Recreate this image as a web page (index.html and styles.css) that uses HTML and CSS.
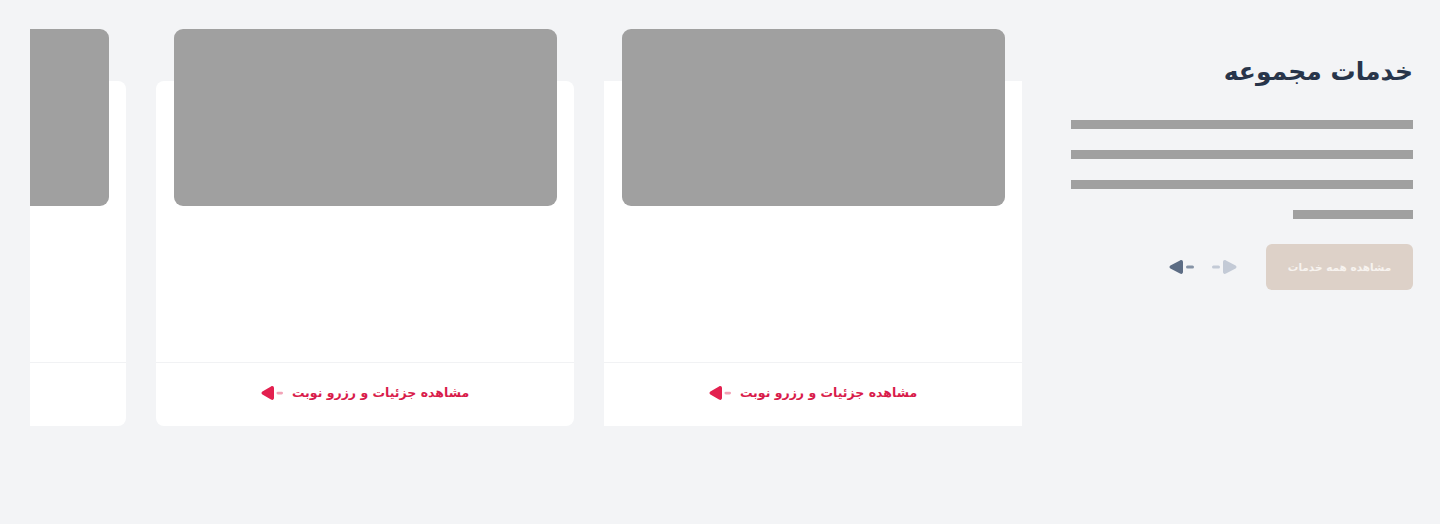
FILE: index.html
```html
<!DOCTYPE html>
<html lang="fa" dir="rtl">
<head>
<meta charset="utf-8">
<title>خدمات مجموعه</title>
<link rel="stylesheet" href="styles.css">
</head>
<body>
<main class="section">
  <aside class="intro">
    <h2 class="intro-title">خدمات مجموعه</h2>
    <div class="skeleton">
      <span class="bar"></span>
      <span class="bar"></span>
      <span class="bar"></span>
      <span class="bar bar--short"></span>
    </div>
    <div class="intro-actions">
      <a class="all-btn" href="#">مشاهده همه خدمات</a>
      <div class="nav">
        <button class="nav-btn nav-btn--off" aria-label="قبلی">
          <svg width="26" height="16" viewBox="0 0 26 16"><rect x="0" y="6.5" width="8" height="3" rx="1.5" fill="#c3cad6"/><path d="M11 3.2 C11 1.2 12.6 0.6 14 1.6 L23.6 6.6 C24.8 7.3 24.8 8.7 23.6 9.4 L14 14.4 C12.6 15.4 11 14.8 11 12.8 Z" fill="#c3cad6"/></svg>
        </button>
        <button class="nav-btn" aria-label="بعدی">
          <svg width="26" height="16" viewBox="0 0 26 16"><path d="M14 3.2 C14 1.2 12.4 0.6 11 1.6 L1.4 6.6 C0.2 7.3 0.2 8.7 1.4 9.4 L11 14.4 C12.4 15.4 14 14.8 14 12.8 Z" fill="#5c6c84"/><rect x="17" y="6.5" width="8" height="3" rx="1.5" fill="#8693a6"/></svg>
        </button>
      </div>
    </div>
  </aside>
  <div class="carousel">
    <div class="track">
      <article class="slide">
        <div class="card card--flat">
          <div class="thumb"></div>
          <div class="card-body"></div>
          <a class="card-foot" href="#"><span>مشاهده جزئیات و رزرو نوبت</span>
            <svg width="24" height="16" viewBox="0 0 24 16"><path d="M13 3.2 C13 1.2 11.4 0.6 10 1.6 L1.4 6.6 C0.2 7.3 0.2 8.7 1.4 9.4 L10 14.4 C11.4 15.4 13 14.8 13 12.8 Z" fill="#e3204f"/><rect x="15.5" y="6.8" width="6.5" height="2.6" rx="1.3" fill="#f2a3b7"/></svg>
          </a>
        </div>
      </article>
      <article class="slide">
        <div class="card">
          <div class="thumb"></div>
          <div class="card-body"></div>
          <a class="card-foot" href="#"><span>مشاهده جزئیات و رزرو نوبت</span>
            <svg width="24" height="16" viewBox="0 0 24 16"><path d="M13 3.2 C13 1.2 11.4 0.6 10 1.6 L1.4 6.6 C0.2 7.3 0.2 8.7 1.4 9.4 L10 14.4 C11.4 15.4 13 14.8 13 12.8 Z" fill="#e3204f"/><rect x="15.5" y="6.8" width="6.5" height="2.6" rx="1.3" fill="#f2a3b7"/></svg>
          </a>
        </div>
      </article>
      <article class="slide">
        <div class="card">
          <div class="thumb"></div>
          <div class="card-body"></div>
          <a class="card-foot" href="#"><span>مشاهده جزئیات و رزرو نوبت</span>
            <svg width="24" height="16" viewBox="0 0 24 16"><path d="M13 3.2 C13 1.2 11.4 0.6 10 1.6 L1.4 6.6 C0.2 7.3 0.2 8.7 1.4 9.4 L10 14.4 C11.4 15.4 13 14.8 13 12.8 Z" fill="#e3204f"/><rect x="15.5" y="6.8" width="6.5" height="2.6" rx="1.3" fill="#f2a3b7"/></svg>
          </a>
        </div>
      </article>
    </div>
  </div>
</main>
</body>
</html>
```

FILE: styles.css
```css
* { box-sizing: border-box; }
html, body { margin: 0; padding: 0; }
body {
  background: #f3f4f6;
  font-family: "DejaVu Sans", "Noto Sans", sans-serif;
  width: 1440px;
  height: 524px;
  overflow: hidden;
}
.section {
  display: flex;
  flex-direction: row;
  align-items: flex-start;
  gap: 49px;
  padding: 29px 27px 0 0;
}
.intro {
  width: 342px;
  flex: 0 0 342px;
  padding-top: 23px;
}
.intro-title {
  margin: 0;
  font-size: 25px;
  font-weight: 700;
  line-height: 40px;
  color: #28354a;
}
.skeleton {
  display: flex;
  flex-direction: column;
  align-items: flex-start;
  gap: 21px;
  margin-top: 28px;
}
.bar {
  display: block;
  width: 100%;
  height: 9px;
  background: #a0a0a0;
}
.bar--short { width: 120px; }
.intro-actions {
  display: flex;
  align-items: center;
  gap: 28px;
  margin-top: 25px;
}
.all-btn {
  display: flex;
  align-items: center;
  justify-content: center;
  width: 147px;
  height: 46px;
  border-radius: 6px;
  background: #ddd1c8;
  color: #f7f3ef;
  font-size: 10.5px;
  font-weight: 700;
  text-decoration: none;
}
.nav {
  display: flex;
  align-items: center;
  gap: 17px;
}
.nav-btn {
  border: 0;
  background: none;
  padding: 0;
  width: 26px;
  height: 16px;
  display: flex;
}
.carousel {
  width: 992px;
  flex: 0 0 992px;
  overflow: hidden;
}
.track {
  display: flex;
  gap: 30px;
}
.slide {
  flex: 0 0 418px;
  padding-top: 52px;
}
.card {
  background: #ffffff;
  border-radius: 8px;
  height: 345px;
  display: flex;
  flex-direction: column;
}
.card--flat { border-radius: 0; }
.thumb {
  height: 177px;
  margin: -52px 17px 0 18px;
  background: #a0a0a0;
  border-radius: 9px;
}
.card-body {
  flex: 1;
  border-bottom: 1px solid #f1f2f4;
}
.card-foot {
  height: 63px;
  display: flex;
  align-items: center;
  justify-content: center;
  gap: 7px;
  color: #d91c4b;
  font-size: 12.5px;
  font-weight: 700;
  text-decoration: none;
  padding-bottom: 4px;
}
.card-foot svg { flex: 0 0 auto; }
```
